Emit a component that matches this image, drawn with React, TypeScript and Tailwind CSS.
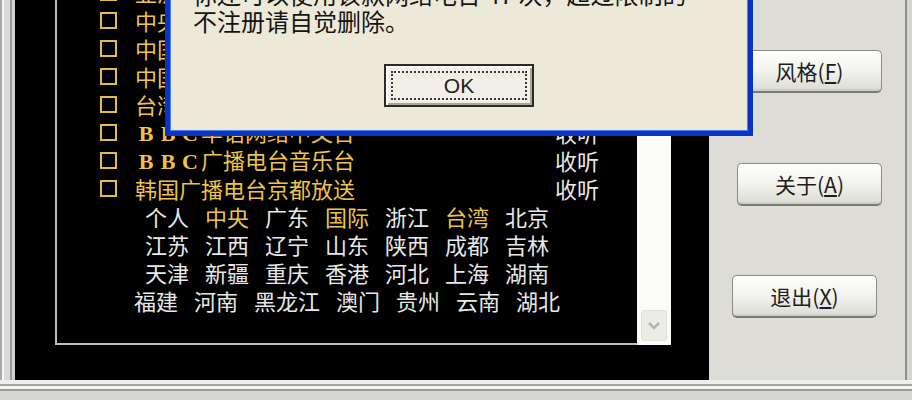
const cjk = "font-['Noto_Sans_CJK_SC','Noto_Sans',sans-serif]";

const stations = [
  "亚洲之声广播电台",
  "中央人民广播电台",
  "中国国际广播电台",
  "中国华艺广播电台",
  "台湾中央广播电台",
  "BBC华语网络中文台",
  "BBC广播电台音乐台",
  "韩国广播电台京都放送",
];

const regions: { label: string; on?: boolean }[][] = [
  [
    { label: "个人" },
    { label: "中央", on: true },
    { label: "广东" },
    { label: "国际", on: true },
    { label: "浙江" },
    { label: "台湾", on: true },
    { label: "北京" },
  ],
  ["江苏", "江西", "辽宁", "山东", "陕西", "成都", "吉林"].map((label) => ({ label })),
  ["天津", "新疆", "重庆", "香港", "河北", "上海", "湖南"].map((label) => ({ label })),
  ["福建", "河南", "黑龙江", "澳门", "贵州", "云南", "湖北"].map((label) => ({ label })),
];

const StationName = ({ name }: { name: string }) => {
  if (!name.startsWith("BBC")) return <>{name}</>;
  return (
    <>
      {["B", "B", "C"].map((c, i) => (
        <span
          key={i}
          className="inline-block w-[22px] text-center font-bold font-['Liberation_Serif',serif]"
        >
          {c}
        </span>
      ))}
      {name.slice(3)}
    </>
  );
};

const SideButton = ({ label, hot, className }: { label: string; hot: string; className: string }) => (
  <button
    className={`h-[43px] w-[145px] rounded-[5px] border border-[#8a8a86] border-b-2 border-b-[#7a7a76] bg-gradient-to-b from-[#fefefd] via-[#f2f2ee] to-[#dcdbd4] text-[21px] leading-none text-[#1c1c1c] shadow-[inset_0_-2px_0_#cfcec6] ${className}`}
  >
    {label}(<span className="underline underline-offset-2">{hot}</span>)
  </button>
);

export default function App() {
  return (
    <div className={`relative w-[912px] h-[400px] overflow-hidden bg-[#dddcd6] ${cjk}`}>
      <div className="flex h-[380px]">
        {/* left frame bevel */}
        <div className="w-[2px] bg-[#a8a8a8]" />
        <div className="w-[2px] bg-[#f6f6f6]" />
        <div className="w-[6px] bg-[#d9d9d6]" />
        <div className="w-[2px] bg-[#9a9a9a]" />
        <div className="w-[3px] bg-[#d2d2d2]" />

        {/* black radio panel */}
        <div className="w-[694px] bg-black pl-[40px]">
          <div className="flex h-[345px]">
            <div className="w-[582px] h-full border-l-2 border-b-2 border-[#bdbdbd] overflow-hidden">
              <div className="-mt-[22px] text-[22px] leading-[28px]">
                {stations.map((s) => (
                  <div key={s} className="flex h-[28px] items-center pl-[43px] pr-[38px]">
                    <span className="h-[17px] w-[17px] shrink-0 border-2 border-[#e4bc46]" />
                    <span className="ml-[18px] flex-1 whitespace-nowrap text-[#edc34d]">
                      <StationName name={s} />
                    </span>
                    <span className="text-[#e8e8e8]">收听</span>
                  </div>
                ))}
                {regions.map((row, i) => (
                  <div key={i} className="flex h-[28px] items-center justify-center gap-[16px]">
                    {row.map((r) => (
                      <span key={r.label} className={r.on ? "text-[#edc34d]" : "text-[#e8e8e8]"}>
                        {r.label}
                      </span>
                    ))}
                  </div>
                ))}
              </div>
            </div>
            {/* scrollbar */}
            <div className="flex w-[34px] flex-col justify-end bg-[#fbfbfa] pb-[4px] pl-[4px]">
              <div className="flex h-[31px] w-[26px] items-center justify-center rounded-[3px] border border-[#e0e0da] bg-[#ecebe6]">
                <svg width="14" height="10" viewBox="0 0 14 10">
                  <path d="M2 2 L7 7 L12 2" fill="none" stroke="#b4b4ae" strokeWidth="2.5" />
                </svg>
              </div>
            </div>
          </div>
        </div>

        {/* right button panel */}
        <div className="flex flex-1">
          <div className="flex w-[196px] flex-col pt-[50px]">
            <SideButton label="风格" hot="F" className="ml-[28px]" />
            <SideButton label="关于" hot="A" className="ml-[28px] mt-[70px]" />
            <SideButton label="退出" hot="X" className="ml-[23px] mt-[69px]" />
          </div>
          <div className="w-[2px] bg-[#8e8e8a]" />
          <div className="flex-1 bg-[#d4d4d0]" />
        </div>
      </div>

      {/* bottom frame bevel */}
      <div className="h-[4px] bg-[#eeeeec]" />
      <div className="h-[2px] bg-[#a3a3a1]" />
      <div className="h-[3px] bg-[#f3f3f1]" />
      <div className="h-[2px] bg-[#9c9c9a]" />
      <div className="h-[9px] bg-[#d6d6d3]" />

      {/* message box over the panel */}
      <div className="absolute left-[165px] top-[-30px] h-[166px] w-[588px] border-[5px] border-[#0b33c4] bg-[#ece9d8] shadow-[inset_0_0_0_1px_#4d7de6]">
        <div className="pl-[23px] pt-[5px] text-[24px] leading-[27px] text-[#141414] whitespace-nowrap">
          <div>你还可以使用该款网络电台 47 次，超过限制的</div>
          <div>不注册请自觉删除。</div>
        </div>
        <div className="mt-[30px] flex justify-center">
          <button className="flex h-[43px] w-[150px] items-center justify-center border-2 border-[#2a2a2a] bg-[#f1efe6] p-[5px] shadow-[inset_2px_2px_0_#ffffff,inset_-2px_-2px_0_#a9a79c]">
            <span className="flex h-full w-full items-center justify-center border-2 border-dotted border-[#3a3a3a] font-['Liberation_Sans_Narrow','Liberation_Sans',sans-serif] text-[21px] font-normal text-[#222]">
              OK
            </span>
          </button>
        </div>
      </div>
    </div>
  );
}
